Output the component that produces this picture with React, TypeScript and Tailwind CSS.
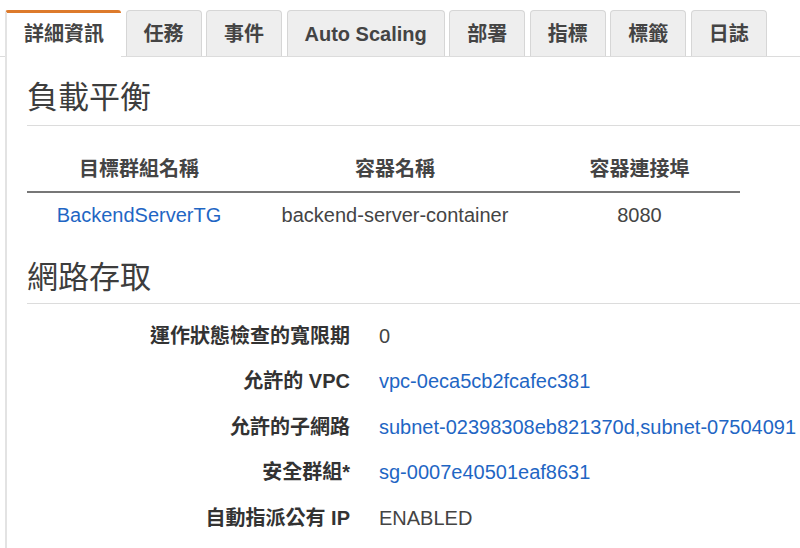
import React from "react";

const TABS = ["詳細資訊", "任務", "事件", "Auto Scaling", "部署", "指標", "標籤", "日誌"];

const NETWORK: { label: string; value: string; link?: boolean }[] = [
  { label: "運作狀態檢查的寬限期", value: "0" },
  { label: "允許的 VPC", value: "vpc-0eca5cb2fcafec381", link: true },
  { label: "允許的子網路", value: "subnet-02398308eb821370d,subnet-07504091", link: true },
  { label: "安全群組*", value: "sg-0007e40501eaf8631", link: true },
  { label: "自動指派公有 IP", value: "ENABLED" },
];

function SectionTitle({ children, pb }: { children: React.ReactNode; pb: string }) {
  return (
    <h2 className={`pt-[21px] ${pb} border-b border-[#dcdcdc] text-[31px] leading-[40px] font-normal text-[#3d3d3d]`}>
      {children}
    </h2>
  );
}

export default function App() {
  return (
    <div
      className="w-[800px] h-[548px] overflow-hidden bg-white text-[#444]"
      style={{ fontFamily: '"Liberation Sans", "Noto Sans CJK TC", sans-serif' }}
    >
      {/* Tabs */}
      <div className="pt-[10px] pl-[5px] flex items-end gap-[4.5px] border-b border-[#dcdcdc]">
        {TABS.map((t, i) =>
          i === 0 ? (
            <div
              key={t}
              className="-mb-px h-[47px] px-[17px] flex items-center bg-white border-l-2 border-l-[#e3e3e3] border-t-[3px] border-t-[#dd7a2b] rounded-t-[3px] text-[20px] font-bold leading-[24px] pb-[2px]"
            >
              {t}
            </div>
          ) : (
            <div
              key={t}
              className="h-[46px] px-[17px] flex items-center bg-[#eeeeee] border border-b-0 border-[#d6d6d6] rounded-t-[4px] text-[20px] font-bold leading-[24px] text-[#444]"
            >
              {t}
            </div>
          )
        )}
      </div>

      {/* Content */}
      <div className="ml-[5px] border-l-2 border-[#e3e3e3] pl-[20px] h-full">
        <SectionTitle pb="pb-[7px]">負載平衡</SectionTitle>

        <div className="w-[713px] text-[20px] leading-[24px] text-center">
          <div className="grid grid-cols-[224px_288px_201px] pt-[31px] pb-[10px] border-b-2 border-[#777] font-bold text-[#444]">
            <div>目標群組名稱</div>
            <div>容器名稱</div>
            <div>容器連接埠</div>
          </div>
          <div className="grid grid-cols-[224px_288px_201px] pt-[10px] pb-[10px]">
            <div className="text-[#1f66c4]">BackendServerTG</div>
            <div>backend-server-container</div>
            <div>8080</div>
          </div>
        </div>

        <SectionTitle pb="pb-[5px]">網路存取</SectionTitle>

        <div className="pt-[9px] text-[20px] leading-[24px]">
          {NETWORK.map((row) => (
            <div key={row.label} className="h-[45.5px] grid grid-cols-[323px_1fr] gap-x-[29px] items-center">
              <div className="text-right font-bold text-[#333] whitespace-nowrap">{row.label}</div>
              <div className={`whitespace-nowrap ${row.link ? "text-[#1f66c4]" : "text-[#444]"}`}>{row.value}</div>
            </div>
          ))}
        </div>
      </div>
    </div>
  );
}
